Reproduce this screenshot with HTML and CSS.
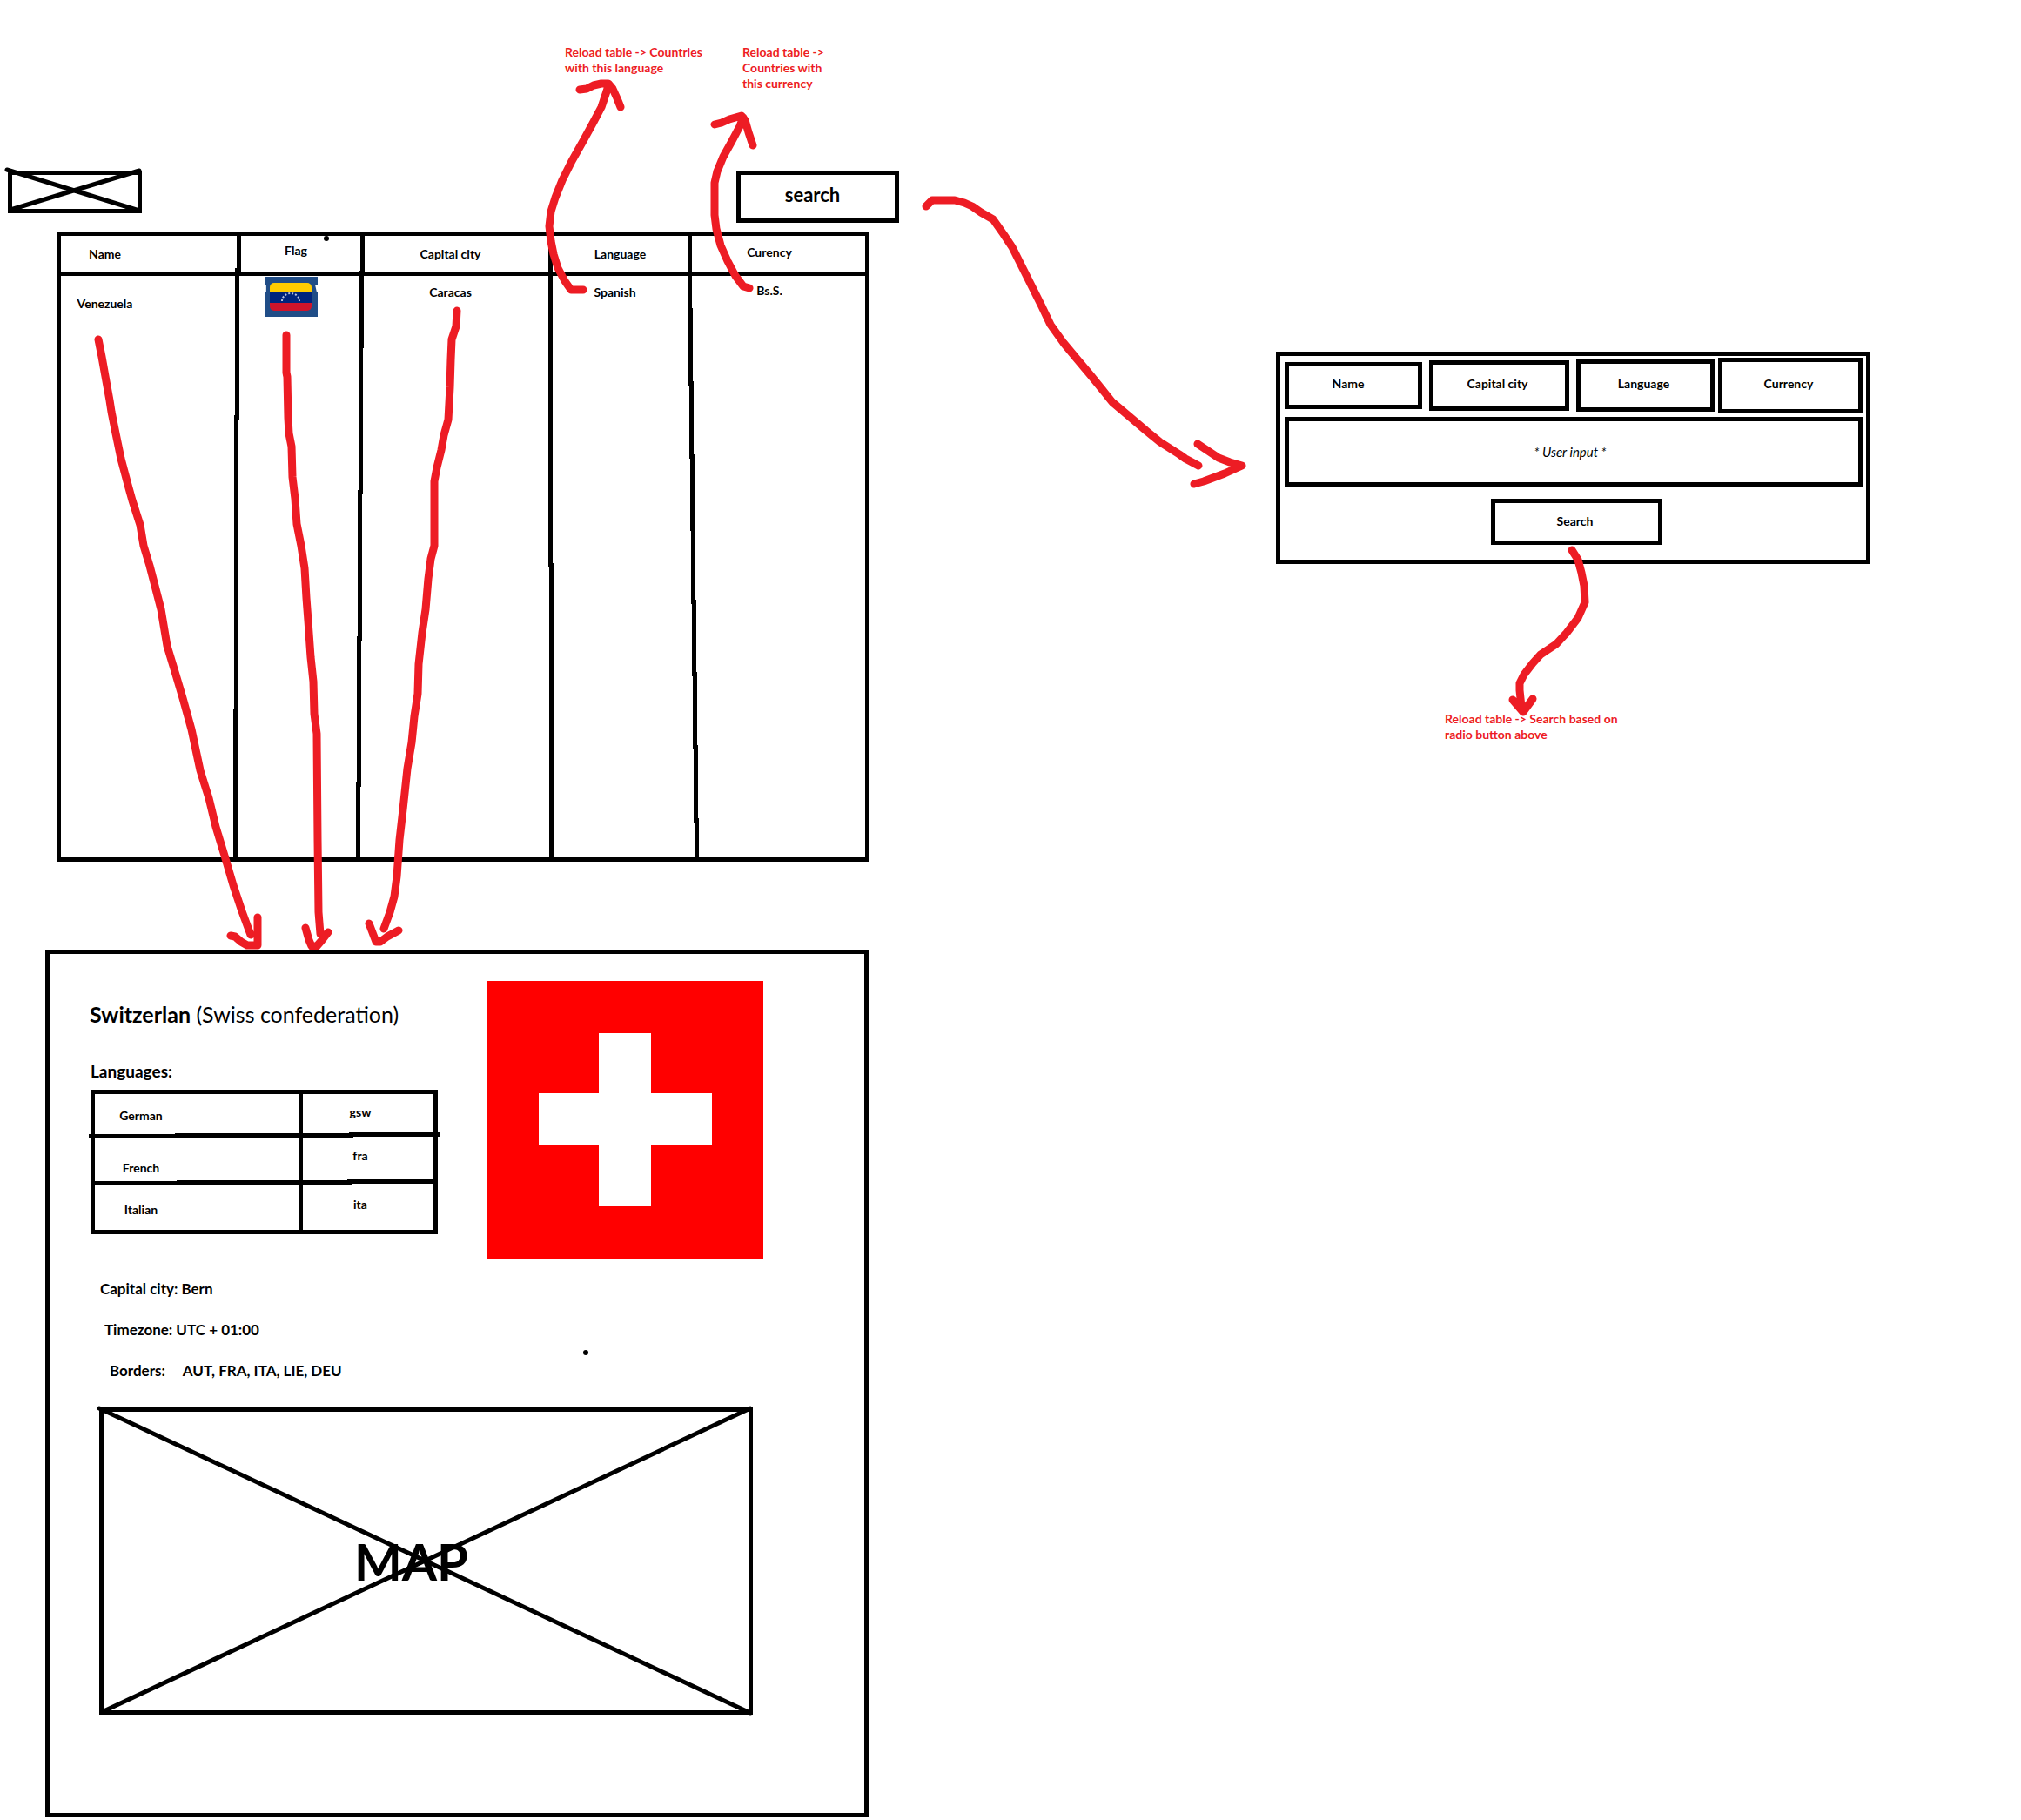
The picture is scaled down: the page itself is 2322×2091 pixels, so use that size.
FILE: index.html
```html
<!DOCTYPE html>
<html lang="en">
<head>
<meta charset="utf-8">
<title>Countries wireframe</title>
<link rel="stylesheet" href="styles.css">
</head>
<body>
<main class="board">
  <section class="left">
    <div class="notes">
      <p class="note note-language">Reload table -&gt; Countries with this language</p>
      <p class="note note-currency">Reload table -&gt; Countries with this currency</p>
    </div>

    <header class="toolbar">
      <svg class="logo" viewBox="0 0 154 49" role="img" aria-label="Logo">
        <path d="M2.500 2.500H151.500V46.500H2.500Z M-1 -1L151 46 M3 45L151 0"/>
      </svg>
      <button class="open-search" type="button">search</button>
    </header>

    <table class="countries">
      <colgroup><col class="c-name"><col class="c-flag"><col class="c-capital"><col class="c-language"><col></colgroup>
      <thead>
        <tr>
          <th class="name" scope="col">Name</th>
          <th class="flag" scope="col">Flag</th>
          <th class="capital" scope="col">Capital city</th>
          <th class="language" scope="col">Language</th>
          <th class="currency" scope="col">Curency</th>
        </tr>
      </thead>
      <tbody>
        <tr>
          <td class="name">Venezuela</td>
          <td class="flag">
            <svg class="flag-ve" viewBox="0 0 60 46" role="img" aria-label="Flag of Venezuela">
              <defs><clipPath id="ve"><rect x="5" y="7" width="48" height="32" rx="5"/></clipPath></defs>
              <rect width="60" height="46" fill="#204d87"/>
              <g clip-path="url(#ve)">
                <rect x="5" y="7" width="48" height="11" fill="#fc0"/>
                <rect x="5" y="18" width="48" height="12" fill="#00247d"/>
                <rect x="5" y="30" width="48" height="10" fill="#cf142b"/>
              </g>
              <path d="M19 28A10 9 0 0 1 39 28" fill="none" stroke="#b9c3de" stroke-width="2" stroke-dasharray="2 2"/>
              <path d="M0 10V18" stroke="#dfe6ef" stroke-width="2"/>
              <path d="M57 9H60V18H59Z" fill="#fff"/>
            </svg>
          </td>
          <td class="capital">Caracas</td>
          <td class="language">Spanish</td>
          <td class="currency">Bs.S.</td>
        </tr>
      </tbody>
    </table>

    <article class="detail">
      <div class="detail-top">
        <div class="info">
          <h1><b>Switzerlan</b> (Swiss confederation)</h1>
          <h2>Languages:</h2>
          <table class="languages">
            <colgroup><col class="l-name"><col></colgroup>
            <tbody>
              <tr><td>German</td><td>gsw</td></tr>
              <tr><td>French</td><td>fra</td></tr>
              <tr><td>Italian</td><td>ita</td></tr>
            </tbody>
          </table>
          <div class="facts">
            <p class="fact">Capital city: Bern</p>
            <p class="fact timezone">Timezone: UTC + 01:00</p>
            <p class="fact borders"><span>Borders:</span><span>AUT, FRA, ITA, LIE, DEU</span></p>
          </div>
        </div>
        <svg class="flag-ch" viewBox="0 0 318 319" role="img" aria-label="Flag of Switzerland">
          <path fill="#f00" d="M0 0H318V319H0Z"/>
          <path fill="#fff" d="M129 60H189V129H259V189H189V259H129V189H60V129H129Z"/>
        </svg>
      </div>
      <div class="map">
        <svg viewBox="0 0 751 353" preserveAspectRatio="none" aria-hidden="true">
          <path d="M0 1L748 351M3 350L748 1"/>
        </svg>
        <span>MAP</span>
      </div>
    </article>
  </section>

  <section class="right">
    <form class="search-panel">
      <div class="options">
        <label class="option option-name"><input type="radio" name="field">Name</label>
        <label class="option option-capital"><input type="radio" name="field">Capital city</label>
        <label class="option option-language"><input type="radio" name="field">Language</label>
        <label class="option option-currency"><input type="radio" name="field">Currency</label>
      </div>
      <input class="query" type="text" aria-label="User input" placeholder="* User input *">
      <button class="submit" type="button">Search</button>
    </form>
    <p class="note note-search">Reload table -&gt; Search based on radio button above</p>
  </section>

  <svg class="ink" viewBox="0 0 2322 2091" preserveAspectRatio="none" aria-hidden="true">
    <!-- hand-drawn table rules -->
    <g class="rules">
      <path d="M272.500 308V479H271.500V817H270.500V987"/>
      <path d="M415.500 311V397H414.500V565H413.500V733H412.500V901H411.500V987"/>
      <path d="M632.500 317V649H633.500V987"/>
      <path d="M792.500 317V356H793.500V440H794.500V524H795.500V607H796.500V691H797.500V774H798.500V858H799.500V942H800.500V987"/>
      <path d="M102 1305.500H203V1304.500H403V1303.500H505"/>
      <path d="M106 1359.500H205V1358.500H401V1357.500H501"/>
    </g>
    <circle cx="375" cy="274" r="3"/>
    <circle cx="673" cy="1554" r="3"/>
    <!-- arrows between screens -->
    <g class="arrows">
      <path d="M670 333L656 333L649 323L641 308L636 292L633 277L631 260L633 243L638 227L646 207L657 185L670 162L682 140L691 123L697 105L699 98M666 103L674 102L682 98L691 96L699 96L704 102L709 113L713 123"/>
      <path d="M861 331L854 329L845 317L836 300L828 282L823 263L821 247L821 210L824 197L831 180L841 162L850 145L854 135M821 143L829 141L838 137L852 133L856 138L860 152L865 167"/>
      <path d="M1064 237L1071 230L1097 230L1108 233L1117 237L1127 244L1141 252L1153 269L1163 284L1173 304L1185 328L1197 352L1207 373L1222 394L1237 412L1253 431L1270 452L1278 462L1297 478L1317 495L1333 508L1355 522L1362 527L1377 535M1376 510L1388 518L1400 526L1413 531L1427 535L1407 544L1383 553L1372 556"/>
      <path d="M1806 632L1813 643L1817 658L1820 673L1821 692L1813 710L1800 727L1788 740L1770 752L1761 762L1751 775L1746 785L1746 793L1748 812M1738 804L1750 818L1761 803"/>
      <path d="M113 390L117 410L122 438L126 460L128 473L133 498L139 527L147 557L152 575L161 603L165 627L172 650L178 673L185 700L192 742L202 775L210 802L220 838L230 885L234 898L240 917L248 950L258 983L268 1017L278 1047L288 1074M265 1075L270 1076L277 1082L284 1086L296 1086L296 1054"/>
      <path d="M329 385L329 428L330 433L331 480L332 498L335 513L336 548L339 573L341 602L346 627L350 653L352 687L354 713L357 755L360 783L361 820L364 843L365 965L366 1048L368 1073M351 1066L355 1080L358 1087L364 1087L370 1080L377 1071"/>
      <path d="M525 357L524 375L519 390L518 413L517 445L515 482L510 500L507 517L502 537L499 553L499 627L495 642L492 665L489 700L485 727L481 763L480 797L476 823L473 853L468 883L463 930L459 965L456 1007L453 1030L448 1048L441 1067M424 1061L432 1082L437 1082L445 1076L458 1069"/>
    </g>
  </svg>
</main>
</body>
</html>
```
FILE: styles.css
```css
* { box-sizing: border-box; }

body {
  margin: 0;
  background: #fff;
  color: #000;
  font: bold 14px/18px Lato, "Open Sans", sans-serif;
}

h1, h2, p { margin: 0; }

button, input { font: inherit; color: inherit; }

.board {
  position: relative;
  display: grid;
  grid-template-columns: minmax(0, 1033fr) minmax(0, 1289fr);
}

/* notes */
.note { color: #ed1c24; }
.notes { display: flex; gap: 40px; padding: 51px 0 0 649px; }
.note-language { width: 164px; }
.note-currency { width: 100px; }
.note-search { width: 208px; margin: 169px 0 0 627px; }

/* toolbar */
.toolbar {
  display: flex;
  justify-content: space-between;
  align-items: flex-start;
  margin-top: 91px;
  padding-left: 9px;
}
.logo {
  width: 154px;
  height: 49px;
  overflow: visible;
  fill: none;
  stroke: #000;
  stroke-width: 5px;
  stroke-linecap: round;
}
.open-search {
  width: 187px;
  height: 60px;
  padding: 0 12px 4px 0;
  border: 5px solid #000;
  background: #fff;
  font-size: 22px;
}

/* tables */
table { border: 5px solid #000; border-spacing: 0; table-layout: fixed; }
th, td { padding: 0; text-align: center; vertical-align: top; }

.countries { width: calc(100% - 99px); height: 724px; margin: 10px 34px 0 65px; }
.c-name { width: 207px; }
.c-flag { width: 142px; }
.c-capital { width: 216px; }
.c-language { width: 160px; }
.countries th { height: 46px; padding-top: 12px; border-right: 5px solid #000; border-bottom: 5px solid #000; }
.countries td { padding-top: 10px; border-right: 5px solid transparent; }
.countries th:last-child, .countries td:last-child { border-right: 0; }
.countries .name { padding-right: 101px; }
.countries th.flag { padding: 8px 11px 0 0; }
.countries td.flag { padding: 1px 21px 0 0; }
.countries .capital { padding-right: 14px; }
.countries td.name { padding-top: 23px; }
.countries td.language { padding-right: 12px; }
.countries .currency { padding-right: 21px; }
.countries th.currency { padding-top: 10px; }
.countries td.currency { padding-top: 8px; }
.flag-ve { display: block; width: 60px; height: 46px; margin: 0 auto; }

/* country detail */
.detail {
  height: 997px;
  margin: 101px 35px 3px 52px;
  padding-top: 31px;
  border: 5px solid #000;
}
.detail-top { display: flex; align-items: flex-start; padding-left: 46px; }
.info { width: 456px; padding-top: 22px; }
h1 { font-size: 25px; font-weight: 400; line-height: 32px; white-space: nowrap; }
h2 { margin-top: 38px; padding-left: 1px; font-size: 19px; line-height: 24px; }

.languages { width: 399px; height: 165px; margin: 9px 0 0 1px; }
.l-name { width: 239px; }
.languages tr { height: 52px; }
.languages td { padding: 10px 18px 0 0; }
.languages td:first-child { padding: 20px 128px 0 0; border-right: 5px solid #000; }
.languages tr:first-child td { padding-top: 12px; }
.languages tr:first-child td:first-child { padding-top: 16px; }
.languages tr:nth-child(2) td:first-child { padding-top: 24px; }
.languages tr:last-child td:last-child { padding-top: 14px; }

.facts { display: grid; gap: 27px; margin-top: 53px; padding-left: 12px; }
.fact { font-size: 17px; line-height: 20px; }
.timezone { padding-left: 5px; }
.borders { display: flex; gap: 20px; padding-left: 11px; }

.flag-ch { width: 318px; height: 319px; }

.map {
  position: relative;
  display: flex;
  align-items: center;
  justify-content: center;
  width: 751px;
  height: 353px;
  margin: 32px 0 0 57px;
  padding-right: 34px;
  border: 5px solid #000;
  font-size: 58px;
  line-height: 64px;
}
.map svg {
  position: absolute;
  inset: -5px;
  width: 751px;
  height: 353px;
  overflow: visible;
  stroke: #000;
  stroke-width: 5px;
  stroke-linecap: round;
}

/* search dialog */
.search-panel {
  display: flex;
  flex-direction: column;
  height: 244px;
  margin: 404px 173px 0 433px;
  padding: 2px 4px 0 5px;
  border: 5px solid #000;
}
.options {
  display: grid;
  grid-template-columns: 162fr 165fr 159fr 166fr;
  column-gap: 4px;
  align-items: center;
}
.option {
  display: flex;
  align-items: center;
  justify-content: center;
  padding: 0 4px 4px 0;
  border: 5px solid #000;
}
.option input { position: absolute; appearance: none; margin: 0; }
.option-name { height: 54px; margin-right: 4px; padding-right: 12px; }
.option-capital { height: 58px; margin-right: 4px; }
.option-language { height: 60px; }
.option-currency { height: 64px; }
.query {
  height: 80px;
  margin-top: 4px;
  padding: 0 8px 0 0;
  border: 5px solid #000;
  background: #fff;
  font-size: 15px;
  font-weight: 400;
  font-style: italic;
  text-align: center;
}
.query::placeholder { color: #000; opacity: 1; }
.submit {
  align-self: center;
  width: 197px;
  height: 53px;
  margin: 14px 0 0 7px;
  padding: 0 4px 2px 0;
  border: 5px solid #000;
  background: #fff;
}

/* freehand ink over the whole board */
.ink { position: absolute; inset: 0; width: 100%; height: 100%; pointer-events: none; }
.rules { fill: none; stroke: #000; stroke-width: 5px; shape-rendering: crispEdges; }
.arrows {
  fill: none;
  stroke: #ed1c24;
  stroke-width: 9px;
  stroke-linecap: round;
  stroke-linejoin: round;
}
```
